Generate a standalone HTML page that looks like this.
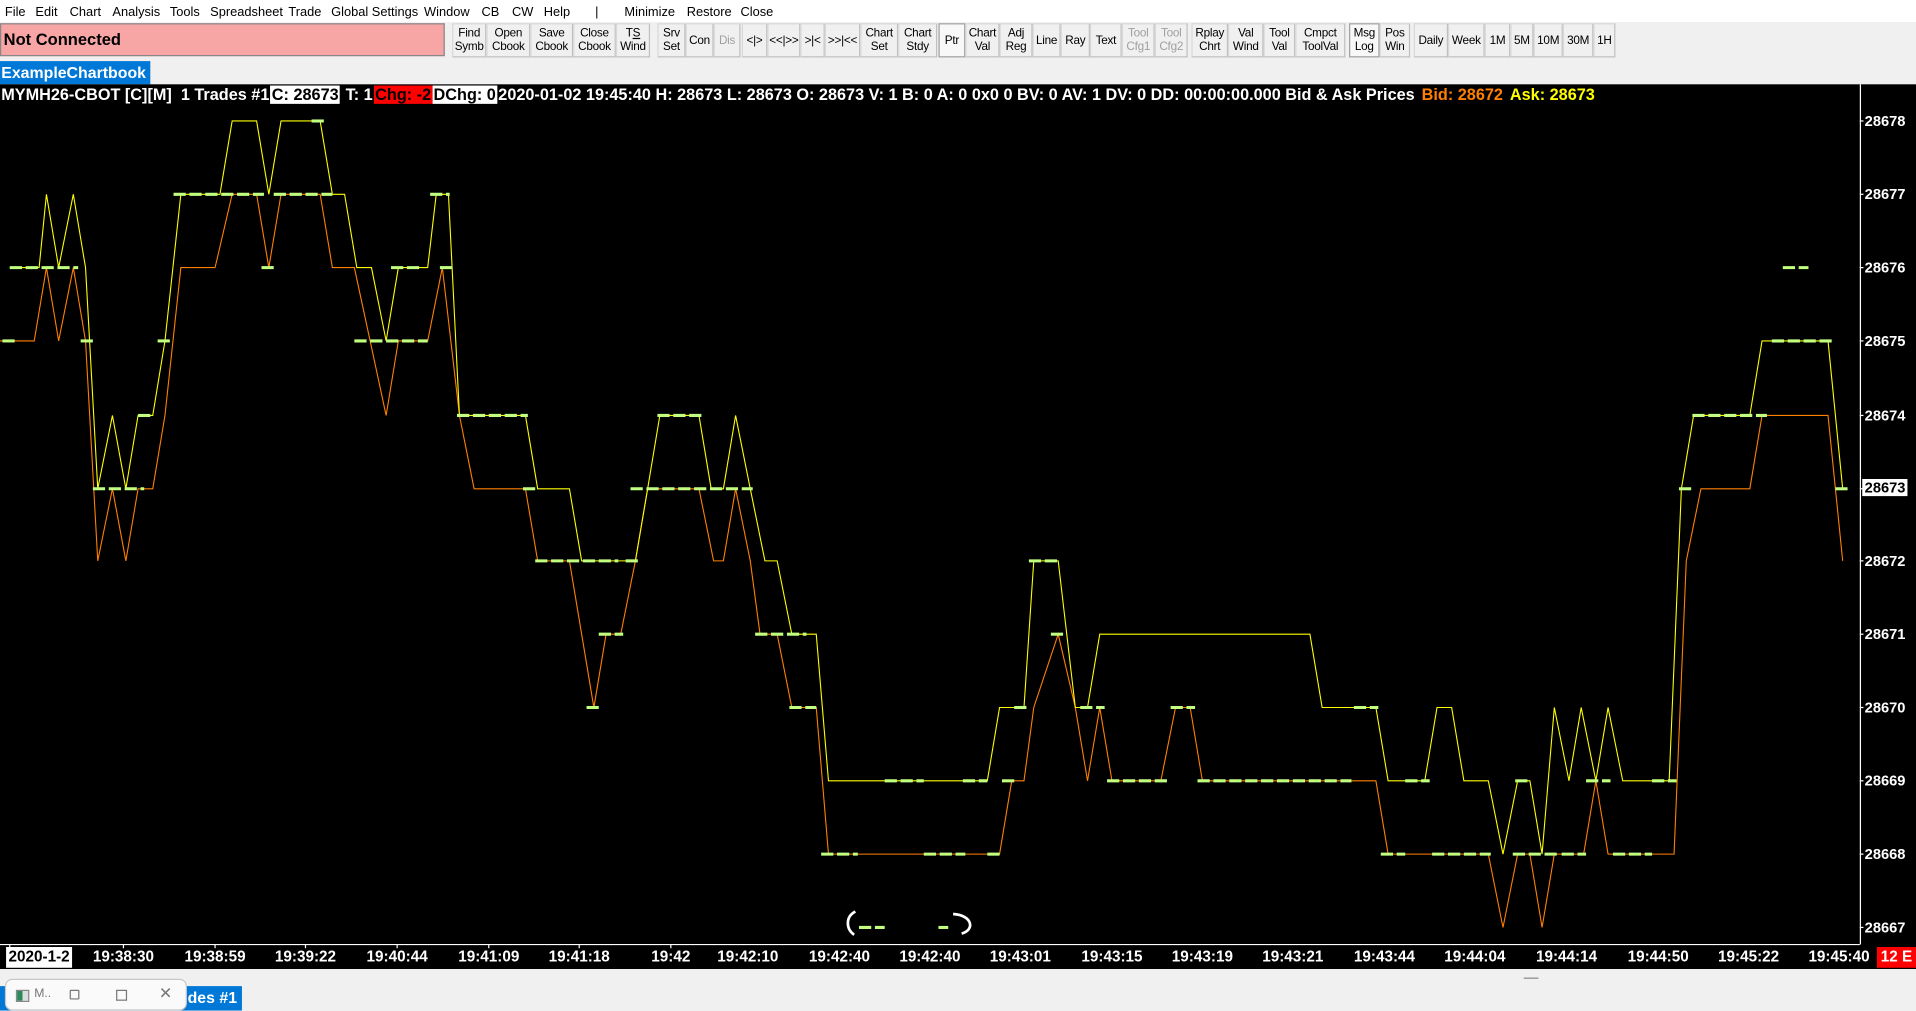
<!DOCTYPE html>
<html><head><meta charset="utf-8"><style>
html,body{margin:0;padding:0;width:1916px;height:1010px;overflow:hidden;background:#f0f0f0}
#w{position:absolute;left:0;top:0;width:1568px;height:826.6px;transform:scale(1.22194);transform-origin:0 0;font-family:"Liberation Sans",Arial,sans-serif}
.menu{position:absolute;top:0;left:0;width:1568px;height:18px;background:#fff;font-size:10.5px;line-height:20px}
.menu span{position:absolute;top:0}
.tb{position:absolute;top:19px;height:28px;display:flex}
.b{box-sizing:border-box;height:28px;border:1px solid #d8d8d8;border-right-color:#c0c0c0;border-bottom-color:#c0c0c0;background:#f0f0f0;font-size:9.6px;line-height:11px;text-align:center;display:flex;align-items:center;justify-content:center;color:#000;letter-spacing:-0.2px}
.g{color:#a0a0a0}
.chart{position:absolute;left:0;top:69px;width:1568px;height:724px;background:#000}
.info{position:absolute;left:0;top:69px;height:18px;font-size:13.3px;font-weight:bold;color:#fff;line-height:18px;white-space:nowrap}
.info span{padding:0 1px}
.pl{position:absolute;left:1526px;color:#fff;font-weight:bold;font-size:12px;line-height:14px}
.tl{position:absolute;top:775px;color:#fff;font-weight:bold;font-size:12.5px;line-height:17px;transform:translateX(-50%);white-space:nowrap}
</style></head><body><div id="w">
<div class="menu">
<span style="left:4px">File</span><span style="left:29px">Edit</span><span style="left:57px">Chart</span><span style="left:92px">Analysis</span><span style="left:139px">Tools</span><span style="left:172px">Spreadsheet</span><span style="left:236px">Trade</span><span style="left:271px">Global Settings</span><span style="left:347px">Window</span><span style="left:394px">CB</span><span style="left:419px">CW</span><span style="left:445px">Help</span><span style="left:487px">|</span><span style="left:511px">Minimize</span><span style="left:562px">Restore</span><span style="left:606px">Close</span>
</div>
<div style="position:absolute;left:0;top:19px;width:364px;height:27px;background:#f7a5a5;border:1px solid #888;box-sizing:border-box;font-weight:bold;font-size:13.5px;line-height:25px;padding-left:2px">Not Connected</div>
<div class="tb" style="left:370px">
<div class="b" style="width:28px">Find<br>Symb</div><div class="b" style="width:36px">Open<br>Cbook</div><div class="b" style="width:35px">Save<br>Cbook</div><div class="b" style="width:35px">Close<br>Cbook</div><div class="b" style="width:28px"><span>T<u>S</u><br>Wind</span></div>
</div>
<div class="tb" style="left:538px">
<div class="b" style="width:23px">Srv<br>Set</div><div class="b" style="width:23px">Con</div><div class="b g" style="width:22px">Dis</div>
</div>
<div class="tb" style="left:607px">
<div class="b" style="width:21px">&lt;|&gt;</div><div class="b" style="width:27px">&lt;&lt;|&gt;&gt;</div><div class="b" style="width:20px">&gt;|&lt;</div><div class="b" style="width:29px">&gt;&gt;|&lt;&lt;</div><div class="b" style="width:31px">Chart<br>Set</div><div class="b" style="width:32px">Chart<br>Stdy</div>
</div>
<div class="tb" style="left:768px">
<div class="b" style="width:22px;background:#f8f8f8;border-color:#a0a0a0">Ptr</div><div class="b" style="width:28px">Chart<br>Val</div><div class="b" style="width:27px">Adj<br>Reg</div><div class="b" style="width:23px">Line</div><div class="b" style="width:24px">Ray</div><div class="b" style="width:26px">Text</div><div class="b g" style="width:27px">Tool<br>Cfg1</div><div class="b g" style="width:27px">Tool<br>Cfg2</div>
</div>
<div class="tb" style="left:975px">
<div class="b" style="width:30px">Rplay<br>Chrt</div><div class="b" style="width:29px">Val<br>Wind</div><div class="b" style="width:26px">Tool<br>Val</div><div class="b" style="width:41px">Cmpct<br>ToolVal</div>
</div>
<div class="tb" style="left:1104px">
<div class="b" style="width:25px;background:#f8f8f8;border-color:#a0a0a0">Msg<br>Log</div><div class="b" style="width:25px">Pos<br>Win</div>
</div>
<div class="tb" style="left:1157px">
<div class="b" style="width:28px">Daily</div><div class="b" style="width:30px">Week</div><div class="b" style="width:21px">1M</div><div class="b" style="width:19px">5M</div><div class="b" style="width:24px">10M</div><div class="b" style="width:25px">30M</div><div class="b" style="width:18px">1H</div>
</div>
<div style="position:absolute;left:0;top:50px;width:123px;height:19px;background:#0078d7;color:#fff;font-weight:bold;font-size:13px;line-height:19px;padding-left:1px;box-sizing:border-box;white-space:nowrap;overflow:hidden">ExampleChartbook</div>
<div class="chart"></div>
<svg style="position:absolute;left:0;top:0" width="1568" height="827" viewBox="0 0 1568 827">
<line x1="1522.5" y1="69" x2="1522.5" y2="773" stroke="#fff" stroke-width="1"/>
<line x1="0" y1="773" x2="1522" y2="773" stroke="#fff" stroke-width="1"/>
<g stroke="#fff" stroke-width="1">
<line x1="1522" y1="99" x2="1525" y2="99"/><line x1="1522" y1="159" x2="1525" y2="159"/><line x1="1522" y1="219" x2="1525" y2="219"/><line x1="1522" y1="279" x2="1525" y2="279"/><line x1="1522" y1="340" x2="1525" y2="340"/><line x1="1522" y1="400" x2="1525" y2="400"/><line x1="1522" y1="459" x2="1525" y2="459"/><line x1="1522" y1="519" x2="1525" y2="519"/><line x1="1522" y1="579" x2="1525" y2="579"/><line x1="1522" y1="639" x2="1525" y2="639"/><line x1="1522" y1="699" x2="1525" y2="699"/><line x1="1522" y1="759" x2="1525" y2="759"/>
</g>
<polyline fill="none" stroke="#ff8000" stroke-width="0.9" points="0,279 28,279 38,219 48,279 60,219 70,279 80,459 92,400 103,459 113,400 125,400 135,340 148,219 176,219 190,159 210,159 220,219 230,159 262,159 272,219 290,219 316,340 326,279 350,279 362,219 376,340 388,400 430,400 440,459 466,459 486,579 496,519 508,519 520,459 530,400 572,400 584,459 592,459 602,400 614,459 622,519 636,519 648,579 668,579 678,699 818,699 828,639 838,639 846,579 866,519 880,579 890,639 900,579 910,639 950,639 962,579 974,579 984,639 1126,639 1136,699 1218,699 1230,759 1242,699 1252,699 1262,759 1272,699 1296,699 1306,639 1316,699 1370,699 1380,459 1392,400 1432,400 1442,340 1496,340 1508,459"/>
<polyline fill="none" stroke="#ffff00" stroke-width="0.9" points="8,219 32,219 38,159 48,219 60,159 70,219 80,400 92,340 103,400 113,340 125,340 135,279 148,159 180,159 190,99 210,99 220,159 230,99 262,99 272,159 282,159 292,219 304,219 316,279 326,219 350,219 357,159 367,159 376,340 430,340 440,400 466,400 476,459 520,459 530,400 540,340 572,340 582,400 592,400 602,340 614,400 626,459 636,459 648,519 668,519 678,639 808,639 818,579 838,579 846,459 866,459 880,579 890,579 900,519 1072,519 1082,579 1126,579 1136,639 1166,639 1176,579 1188,579 1198,639 1218,639 1230,699 1242,639 1252,639 1262,699 1272,579 1284,639 1294,579 1306,639 1316,579 1328,639 1366,639 1376,400 1386,340 1432,340 1442,279 1496,279 1508,400"/>
<g stroke="#c0ff80" stroke-width="2.5" stroke-dasharray="10 3">
<line x1="8" y1="219" x2="64" y2="219"/><line x1="2" y1="279" x2="12" y2="279"/><line x1="66" y1="279" x2="76" y2="279"/>
<line x1="76" y1="400" x2="118" y2="400"/><line x1="113" y1="340" x2="126" y2="340"/><line x1="129" y1="279" x2="139" y2="279"/>
<line x1="142" y1="159" x2="216" y2="159"/><line x1="224" y1="159" x2="272" y2="159"/><line x1="255" y1="99" x2="266" y2="99"/><line x1="214" y1="219" x2="224" y2="219"/>
<line x1="290" y1="279" x2="350" y2="279"/><line x1="320" y1="219" x2="346" y2="219"/><line x1="352" y1="159" x2="368" y2="159"/><line x1="360" y1="219" x2="372" y2="219"/>
<line x1="374" y1="340" x2="432" y2="340"/><line x1="428" y1="400" x2="438" y2="400"/><line x1="438" y1="459" x2="506" y2="459"/><line x1="490" y1="519" x2="510" y2="519"/><line x1="480" y1="579" x2="490" y2="579"/>
<line x1="512" y1="459" x2="524" y2="459"/><line x1="516" y1="400" x2="616" y2="400"/><line x1="538" y1="340" x2="576" y2="340"/><line x1="618" y1="519" x2="660" y2="519"/><line x1="646" y1="579" x2="668" y2="579"/>
<line x1="672" y1="699" x2="702" y2="699"/><line x1="724" y1="639" x2="756" y2="639"/><line x1="756" y1="699" x2="790" y2="699"/><line x1="788" y1="639" x2="808" y2="639"/><line x1="808" y1="699" x2="820" y2="699"/>
<line x1="820" y1="639" x2="830" y2="639"/><line x1="830" y1="579" x2="842" y2="579"/><line x1="842" y1="459" x2="866" y2="459"/><line x1="860" y1="519" x2="872" y2="519"/><line x1="884" y1="579" x2="904" y2="579"/>
<line x1="906" y1="639" x2="956" y2="639"/><line x1="958" y1="579" x2="978" y2="579"/><line x1="980" y1="639" x2="1106" y2="639"/><line x1="1108" y1="579" x2="1128" y2="579"/>
<line x1="1130" y1="699" x2="1150" y2="699"/><line x1="1150" y1="639" x2="1170" y2="639"/><line x1="1172" y1="699" x2="1220" y2="699"/><line x1="1238" y1="699" x2="1276" y2="699"/><line x1="1240" y1="639" x2="1250" y2="639"/>
<line x1="1278" y1="699" x2="1298" y2="699"/><line x1="1298" y1="639" x2="1318" y2="639"/><line x1="1320" y1="699" x2="1352" y2="699"/><line x1="1352" y1="639" x2="1372" y2="639"/>
<line x1="1374" y1="400" x2="1384" y2="400"/><line x1="1385" y1="340" x2="1446" y2="340"/><line x1="1450" y1="279" x2="1500" y2="279"/><line x1="1502" y1="400" x2="1512" y2="400"/><line x1="1459" y1="219" x2="1480" y2="219"/>
<line x1="703" y1="759" x2="724" y2="759"/><line x1="768" y1="759" x2="776" y2="759"/>
</g>
<path d="M700,746 C692,750 692,760 699,765" fill="none" stroke="#fff" stroke-width="2.2"/>
<path d="M780,748 C796,749 798,761 787,764" fill="none" stroke="#fff" stroke-width="2.2"/>
<g stroke="#fff" stroke-width="1">
<line x1="8" y1="773" x2="8" y2="776"/><line x1="101" y1="773" x2="101" y2="776"/><line x1="176" y1="773" x2="176" y2="776"/><line x1="250" y1="773" x2="250" y2="776"/><line x1="325" y1="773" x2="325" y2="776"/><line x1="400" y1="773" x2="400" y2="776"/><line x1="474" y1="773" x2="474" y2="776"/><line x1="549" y1="773" x2="549" y2="776"/>
</g>
</svg>
<div class="info"><span>MYMH26-CBOT [C][M]&nbsp; 1 Trades #1</span><span style="background:#fff;color:#000">C: 28673</span> <span>T: 1</span><span style="background:#f00;color:#000">Chg: -2</span><span style="background:#fff;color:#000">DChg: 0</span><span>2020-01-02 19:45:40 H: 28673 L: 28673 O: 28673 V: 1 B: 0 A: 0 0x0 0 BV: 0 AV: 1 DV: 0 DD: 00:00:00.000 Bid &amp; Ask Prices&nbsp;</span><span style="color:#ff8000">Bid: 28672&nbsp;</span><span style="color:#ffff00">Ask: 28673</span></div>
<div class="pl" style="top:92px">28678</div><div class="pl" style="top:152px">28677</div><div class="pl" style="top:212px">28676</div><div class="pl" style="top:272px">28675</div><div class="pl" style="top:333px">28674</div><div class="pl" style="top:392px;background:#fff;color:#000;padding:0 2px;left:1524px">28673</div><div class="pl" style="top:452px">28672</div><div class="pl" style="top:512px">28671</div><div class="pl" style="top:572px">28670</div><div class="pl" style="top:632px">28669</div><div class="pl" style="top:692px">28668</div><div class="pl" style="top:752px">28667</div>
<div class="tl" style="left:32px;background:#fff;color:#000;padding:0 2px">2020-1-2</div>
<div class="tl" style="left:101px">19:38:30</div><div class="tl" style="left:176px">19:38:59</div><div class="tl" style="left:250px">19:39:22</div><div class="tl" style="left:325px">19:40:44</div><div class="tl" style="left:400px">19:41:09</div><div class="tl" style="left:474px">19:41:18</div><div class="tl" style="left:549px">19:42</div><div class="tl" style="left:612px">19:42:10</div><div class="tl" style="left:687px">19:42:40</div><div class="tl" style="left:761px">19:42:40</div><div class="tl" style="left:835px">19:43:01</div><div class="tl" style="left:910px">19:43:15</div><div class="tl" style="left:984px">19:43:19</div><div class="tl" style="left:1058px">19:43:21</div><div class="tl" style="left:1133px">19:43:44</div><div class="tl" style="left:1207px">19:44:04</div><div class="tl" style="left:1282px">19:44:14</div><div class="tl" style="left:1357px">19:44:50</div><div class="tl" style="left:1431px">19:45:22</div><div class="tl" style="left:1505px">19:45:40</div>
<div style="position:absolute;left:1536px;top:775px;width:32px;height:17px;background:#f00;color:#fff;font-weight:bold;font-size:12.5px;line-height:17px;text-align:center">12 E</div>
<div style="position:absolute;left:1247px;top:800px;width:12px;height:1px;background:#888"></div>
<div style="position:absolute;left:0;top:807px;width:198px;height:20px;background:#0078d7;color:#fff;font-weight:bold;font-size:13px;line-height:20px;text-align:right;padding-right:4px;box-sizing:border-box">des #1</div>
<div style="position:absolute;left:4px;top:801px;width:149px;height:26px;background:#fafafa;border:1px solid #c8c8c8;border-radius:6px;box-sizing:border-box;font-size:10px;color:#777">
<div style="position:absolute;left:8px;top:8px;width:9px;height:8px;border:1px solid #888;background:linear-gradient(90deg,#2a8a5a 50%,#ddd 50%)"></div>
<span style="position:absolute;left:23px;top:6px">M..</span>
<div style="position:absolute;left:52px;top:8px;width:6px;height:6px;border:1px solid #777;border-radius:1px"></div>
<div style="position:absolute;left:90px;top:8px;width:7px;height:7px;border:1px solid #777"></div>
<span style="position:absolute;left:125px;top:3px;font-size:13px">✕</span>
</div>
</div></body></html>
